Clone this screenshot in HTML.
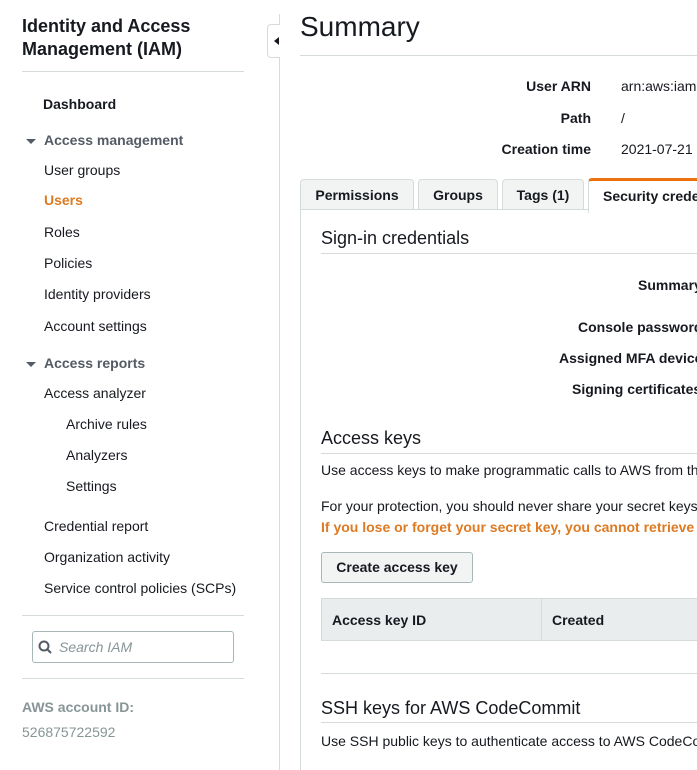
<!DOCTYPE html><html><head><style>
body{margin:0;width:697px;height:770px;overflow:hidden;background:#fff;font-family:"Liberation Sans",sans-serif;color:#16191f;position:relative}
.a{position:absolute;white-space:nowrap}
.n{font-size:14px;color:#16191f}
.b{font-weight:bold}
.g{color:#545b64}
.h{position:absolute;height:1px;background:#d5dbdb}
.v{position:absolute;width:1px;background:#d5dbdb}
.tab{position:absolute;top:179px;height:30px;background:#f2f3f3;border:1px solid #d5dbdb;border-bottom:none;border-radius:4px 4px 0 0;font-size:14px;font-weight:bold;text-align:center;line-height:30px;color:#16191f;white-space:nowrap;overflow:hidden}
.r{text-align:right;font-size:14px;font-weight:bold}
</style></head><body>
<div class="a b" style="left:22px;top:15px;font-size:18px;line-height:23px;color:#16191f">Identity and Access<br>Management (IAM)</div>
<div class="h" style="left:22px;top:71px;width:222px"></div>
<div class="a n b" style="left:43px;top:96px">Dashboard</div>
<div class="a" style="left:26px;top:139px;border-left:5px solid transparent;border-right:5px solid transparent;border-top:5px solid #545b64"></div>
<div class="a n b g" style="left:44px;top:132px">Access management</div>
<div class="a n" style="left:44px;top:162px">User groups</div>
<div class="a n b" style="left:44px;top:192px;color:#dd7a22">Users</div>
<div class="a n" style="left:44px;top:224px">Roles</div>
<div class="a n" style="left:44px;top:255px">Policies</div>
<div class="a n" style="left:44px;top:286px">Identity providers</div>
<div class="a n" style="left:44px;top:318px">Account settings</div>
<div class="a" style="left:26px;top:362px;border-left:5px solid transparent;border-right:5px solid transparent;border-top:5px solid #545b64"></div>
<div class="a n b g" style="left:44px;top:355px">Access reports</div>
<div class="a n" style="left:44px;top:385px">Access analyzer</div>
<div class="a n" style="left:66px;top:416px">Archive rules</div>
<div class="a n" style="left:66px;top:447px">Analyzers</div>
<div class="a n" style="left:66px;top:478px">Settings</div>
<div class="a n" style="left:44px;top:518px">Credential report</div>
<div class="a n" style="left:44px;top:549px">Organization activity</div>
<div class="a n" style="left:44px;top:580px">Service control policies (SCPs)</div>
<div class="h" style="left:22px;top:615px;width:222px"></div>
<div class="a" style="left:32px;top:631px;width:200px;height:30px;border:1px solid #aab7b8;border-radius:3px"></div>
<svg class="a" style="left:38px;top:640px" width="14" height="14"><circle cx="6" cy="6" r="4.5" fill="none" stroke="#545b64" stroke-width="2"/><line x1="9.5" y1="9.5" x2="13" y2="13" stroke="#545b64" stroke-width="2"/></svg>
<div class="a" style="left:59px;top:639px;font-size:14px;font-style:italic;color:#879596">Search IAM</div>
<div class="h" style="left:22px;top:678px;width:222px"></div>
<div class="a b" style="left:22px;top:699px;font-size:14px;color:#879596">AWS account ID:</div>
<div class="a" style="left:22px;top:724px;font-size:14px;color:#879596">526875722592</div>
<div class="v" style="left:279px;top:14px;height:756px"></div>
<div class="a" style="left:267px;top:24px;width:12px;height:32px;border:1px solid #d5dbdb;border-right:none;border-radius:4px 0 0 4px;background:#fff"></div>
<div class="a" style="left:274px;top:37px;border-top:4px solid transparent;border-bottom:4px solid transparent;border-right:5px solid #16191f"></div>
<div class="a" style="left:300px;top:11px;font-size:28px;color:#16191f">Summary</div>
<div class="h" style="left:300px;top:55px;width:397px"></div>
<div class="a r" style="right:106px;top:78px">User ARN</div><div class="a n" style="left:621px;top:78px">arn:aws:iam</div>
<div class="a r" style="right:106px;top:110px">Path</div><div class="a n" style="left:621px;top:110px">/</div>
<div class="a r" style="right:106px;top:141px">Creation time</div><div class="a n" style="left:621px;top:141px">2021-07-21</div>
<div class="tab" style="left:300px;width:112px">Permissions</div>
<div class="tab" style="left:418px;width:78px">Groups</div>
<div class="tab" style="left:502px;width:80px">Tags (1)</div>
<div class="tab" style="left:588px;width:120px;background:#fff;border-top:3px solid #ec7211;top:178px;height:32px;text-align:left;padding-left:14px">Security credentials</div>
<div class="h" style="left:300px;top:209px;width:288px"></div>
<div class="v" style="left:300px;top:209px;height:561px"></div>
<div class="a" style="left:321px;top:228px;font-size:18px;color:#16191f">Sign-in credentials</div>
<div class="h" style="left:321px;top:253px;width:376px"></div>
<div class="a r" style="left:638px;top:277px">Summary</div>
<div class="a r" style="left:578px;top:319px">Console password</div>
<div class="a r" style="left:559px;top:350px">Assigned MFA device</div>
<div class="a r" style="left:572px;top:381px">Signing certificates</div>
<div class="a" style="left:321px;top:428px;font-size:18px">Access keys</div>
<div class="h" style="left:321px;top:453px;width:376px"></div>
<div class="a n" style="left:321px;top:462px">Use access keys to make programmatic calls to AWS from the</div>
<div class="a n" style="left:321px;top:498px">For your protection, you should never share your secret keys</div>
<div class="a n b" style="left:321px;top:519px;color:#dd7a22">If you lose or forget your secret key, you cannot retrieve it</div>
<div class="a n b" style="left:321px;top:552px;width:150px;height:29px;border:1px solid #aab7b8;border-radius:3px;background:#f2f3f3;text-align:center;line-height:29px">Create access key</div>
<div class="a" style="left:321px;top:598px;width:380px;height:41px;background:#eaeded;border:1px solid #d5dbdb"></div>
<div class="v" style="left:541px;top:598px;height:42px"></div>
<div class="a n b" style="left:332px;top:612px">Access key ID</div>
<div class="a n b" style="left:552px;top:612px">Created</div>
<div class="h" style="left:321px;top:673px;width:376px"></div>
<div class="a" style="left:321px;top:698px;font-size:18px">SSH keys for AWS CodeCommit</div>
<div class="h" style="left:321px;top:722px;width:376px"></div>
<div class="a n" style="left:321px;top:733px">Use SSH public keys to authenticate access to AWS CodeCommit</div>
</body></html>
